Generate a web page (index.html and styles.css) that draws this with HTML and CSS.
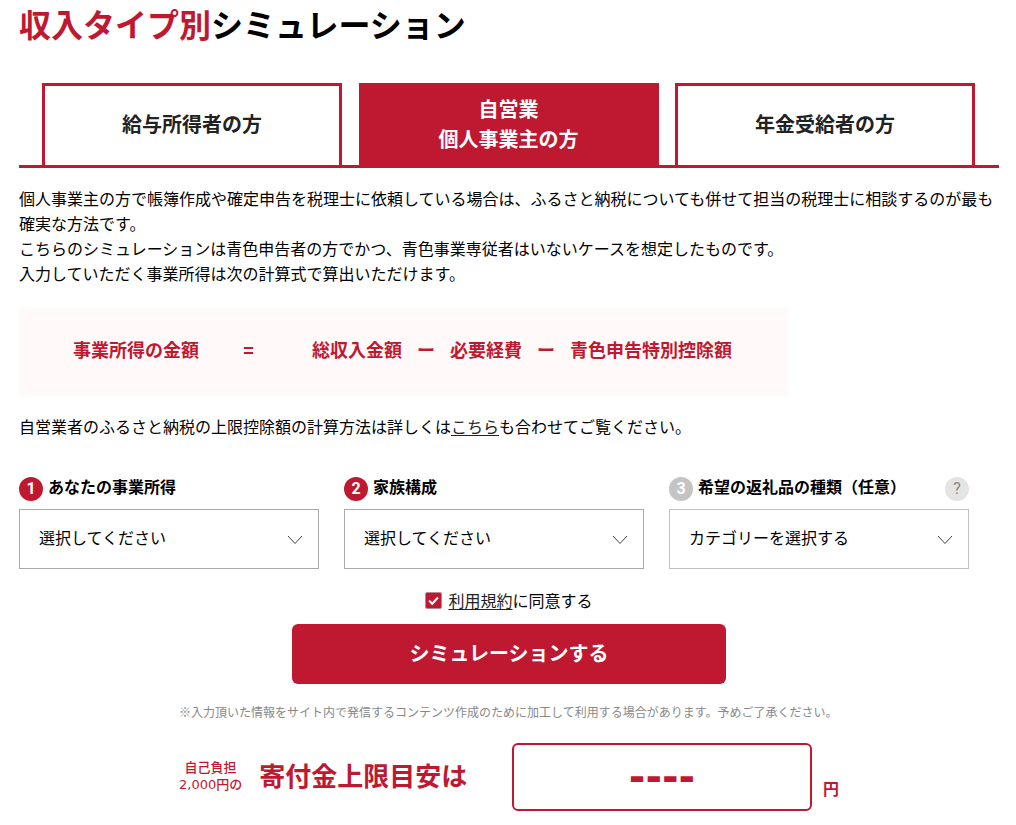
FILE: index.html
```html
<!DOCTYPE html>
<html lang="ja">
<head>
<meta charset="utf-8">
<meta name="viewport" content="width=device-width, initial-scale=1">
<title>収入タイプ別シミュレーション</title>
<link rel="stylesheet" href="styles.css">
</head>
<body>
<main class="page">
  <h1 class="title"><span class="accent">収入タイプ別</span>シミュレーション</h1>

  <nav class="tabs">
    <button type="button" class="tab">給与所得者の方</button>
    <button type="button" class="tab tab-active">自営業<br>個人事業主の方</button>
    <button type="button" class="tab">年金受給者の方</button>
  </nav>

  <p class="text">個人事業主の方で帳簿作成や確定申告を税理士に依頼している場合は、ふるさと納税についても併せて担当の税理士に相談するのが最も確実な方法です。<br>こちらのシミュレーションは青色申告者の方でかつ、青色事業専従者はいないケースを想定したものです。<br>入力していただく事業所得は次の計算式で算出いただけます。</p>

  <div class="formula">
    <span>事業所得の金額</span>
    <span class="equals">=</span>
    <span class="terms"><span>総収入金額</span><span>ー</span><span>必要経費</span><span>ー</span><span>青色申告特別控除額</span></span>
  </div>

  <p class="text">自営業者のふるさと納税の上限控除額の計算方法は詳しくは<a href="#">こちら</a>も合わせてご覧ください。</p>

  <form class="form">
    <div class="fields">
      <div class="field">
        <div class="field-head"><span class="badge">1</span><label for="income">あなたの事業所得</label></div>
        <div class="select-wrap">
          <select id="income"><option>選択してください</option></select>
          <svg class="caret" viewBox="0 0 16 10" aria-hidden="true"><path d="M1 1l7 7.500 7-7.500"/></svg>
        </div>
      </div>
      <div class="field">
        <div class="field-head"><span class="badge">2</span><label for="family">家族構成</label></div>
        <div class="select-wrap">
          <select id="family"><option>選択してください</option></select>
          <svg class="caret" viewBox="0 0 16 10" aria-hidden="true"><path d="M1 1l7 7.500 7-7.500"/></svg>
        </div>
      </div>
      <div class="field field-optional">
        <div class="field-head"><span class="badge">3</span><label for="category">希望の返礼品の種類（任意）</label><button type="button" class="help">?</button></div>
        <div class="select-wrap">
          <select id="category"><option>カテゴリーを選択する</option></select>
          <svg class="caret" viewBox="0 0 16 10" aria-hidden="true"><path d="M1 1l7 7.500 7-7.500"/></svg>
        </div>
      </div>
    </div>

    <div class="agree">
      <span class="check">
        <input type="checkbox" id="agree" checked>
        <svg viewBox="0 0 17 17" aria-hidden="true"><path d="M4 8.500l3.200 3.300L13 5.500"/></svg>
      </span>
      <label for="agree"><a href="#">利用規約</a>に同意する</label>
    </div>
    <button type="button" class="submit">シミュレーションする</button>
  </form>

  <section class="result">
    <p class="note">※入力頂いた情報をサイト内で発信するコンテンツ作成のために加工して利用する場合があります。予めご了承ください。</p>
    <div class="result-row">
      <span class="burden">自己負担<br><span class="digits">2,000</span>円の</span>
      <span class="result-label">寄付金上限目安は</span>
      <output class="amount">----</output>
      <span class="yen">円</span>
    </div>
  </section>
</main>
</body>
</html>
```
FILE: styles.css
```css
:root {
  --red: #bf1932;
}

* {
  box-sizing: border-box;
}

body {
  margin: 0;
  background: #fff;
  color: #000;
  font-family: "Noto Sans CJK JP", sans-serif;
  font-size: 16px;
  line-height: 25px;
}

button,
select {
  font: inherit;
  color: inherit;
}

a {
  color: #222;
  text-underline-offset: 2px;
}

.page {
  max-width: 1018px;
  padding: 0 17px 12px 19px;
}

.title {
  margin: 0 0 37px;
  font-size: 32px;
  line-height: 46px;
}

.accent {
  color: var(--red);
}

.tabs {
  display: flex;
  justify-content: space-between;
  gap: 16px;
  padding: 0 24px 0 23px;
  border-bottom: 3px solid var(--red);
}

.tab {
  flex: 0 1 300px;
  height: 82px;
  padding: 0 0 4px;
  border: 3px solid var(--red);
  border-bottom: 0;
  background: #fff;
  color: #222;
  font-size: 20px;
  font-weight: bold;
  line-height: 30px;
}

.tab-active {
  background: var(--red);
  color: #fff;
}

.text {
  margin: 18px 0 22px;
}

.formula {
  display: flex;
  align-items: center;
  width: fit-content;
  margin-bottom: 18px;
  padding: 28px 56px 34px 54px;
  background: #fff9f9;
  color: var(--red);
  font-size: 18px;
  font-weight: bold;
  line-height: 26px;
}

.equals {
  width: 113px;
  padding-right: 14px;
  text-align: center;
}

.terms {
  display: flex;
  gap: 15px;
}

.form {
  display: flex;
  flex-direction: column;
  align-items: center;
  margin-top: 38px;
}

.fields {
  display: grid;
  grid-template-columns: repeat(3, 1fr);
  gap: 25px;
  width: 100%;
  padding-right: 30px;
}

.field-head {
  display: flex;
  align-items: center;
  gap: 5px;
  height: 24px;
  margin-bottom: 8px;
  font-weight: bold;
  line-height: 20px;
}

.field-head label {
  padding-bottom: 6px;
  white-space: nowrap;
}

.badge,
.help {
  width: 24px;
  height: 24px;
  flex: none;
  border-radius: 50%;
  font-family: Roboto, sans-serif;
  font-size: 16px;
  line-height: 24px;
  text-align: center;
}

.badge {
  background: var(--red);
  color: #fff;
}

.field-optional .badge {
  background: #c4c4c4;
}

.help {
  margin-left: auto;
  padding: 0;
  border: 0;
  background: #e4e4e4;
  color: #888;
  font-weight: normal;
}

.select-wrap {
  position: relative;
}

.select-wrap select {
  width: 100%;
  height: 60px;
  padding: 0 40px 4px 19px;
  border: 1px solid #aaa;
  border-radius: 0;
  background: #fff;
  appearance: none;
}

.field-optional select {
  border-color: #c0c0c0;
}

.caret {
  position: absolute;
  right: 16px;
  top: 26px;
  width: 16px;
  height: 10px;
  fill: none;
  stroke: #444;
  stroke-width: 1;
  pointer-events: none;
}

.agree {
  display: flex;
  align-items: center;
  gap: 6px;
  margin: 19px 0 11px;
}

.check {
  position: relative;
  width: 17px;
  height: 17px;
}

.check input {
  display: block;
  width: 17px;
  height: 17px;
  margin: 0;
  border: 1px solid #b88a92;
  border-radius: 2px;
  appearance: none;
}

.check input:checked {
  background: var(--red);
}

.check svg {
  position: absolute;
  inset: 0;
  fill: none;
  stroke: #fff;
  stroke-width: 2;
  pointer-events: none;
}

.submit {
  width: 100%;
  max-width: 434px;
  height: 60px;
  padding: 0 0 4px;
  border: 0;
  border-radius: 6px;
  background: var(--red);
  color: #fff;
  font-size: 20px;
  font-weight: bold;
}

.result {
  max-width: 660px;
  margin: 18px auto 0;
}

.note {
  margin: 0 0 21px;
  color: #888;
  font-size: 12px;
  line-height: 20px;
}

.result-row {
  display: flex;
  align-items: center;
  color: var(--red);
  white-space: nowrap;
}

.burden {
  margin-right: 17px;
  padding-bottom: 4px;
  font-size: 13px;
  font-weight: 500;
  line-height: 17px;
  text-align: center;
}

.digits {
  font-family: "DejaVu Sans", sans-serif;
}

.result-label {
  padding-bottom: 4px;
  font-size: 26px;
  font-weight: bold;
  line-height: 36px;
}

.amount {
  flex: 0 1 300px;
  height: 68px;
  margin: 0 11px 0 auto;
  border: 2px solid var(--red);
  border-radius: 6px;
  font-family: "DejaVu Sans", sans-serif;
  font-size: 40px;
  font-weight: bold;
  line-height: 64px;
  text-align: center;
}

.yen {
  align-self: flex-end;
  padding-bottom: 10px;
  font-weight: bold;
}
```
